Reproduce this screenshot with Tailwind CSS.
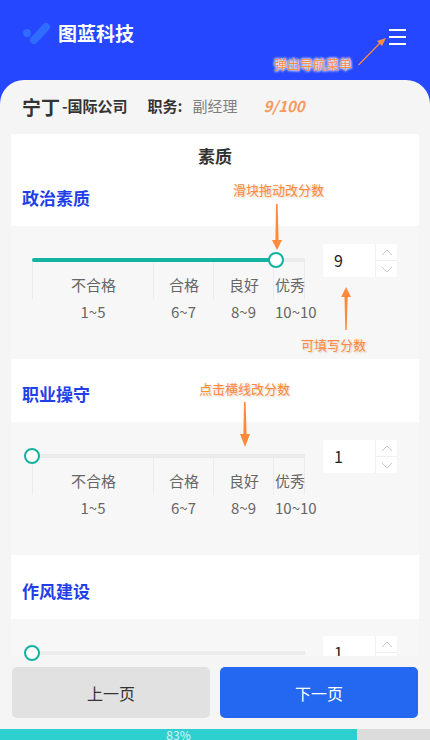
<!DOCTYPE html>
<html lang="zh-CN">
<head>
    <meta charset="UTF-8" />
    <meta name="viewport" content="width=device-width, initial-scale=1.0" />
    <title>素质评分</title>
    <script src="https://cdn.jsdelivr.net/npm/@tailwindcss/browser@4"></script>
</head>
<body class="bg-[#2447ff] font-['Noto_Sans_CJK_SC','Noto_Sans',sans-serif]">

<div class="relative w-[430px] h-[740px] overflow-hidden bg-[#2447ff] flex flex-col">

    <!-- header -->
    <div class="h-[80px] shrink-0 flex justify-between items-start pl-[22px] pr-[24px] pt-[19px]">
        <div class="flex items-center gap-[7px] h-[28px]">
            <svg width="29" height="24" viewBox="0 0 29 24">
                <circle cx="5" cy="12" r="4" fill="#2f6cff" />
                <line x1="12" y1="19" x2="24" y2="6" stroke="#2f6cff" stroke-width="8" stroke-linecap="round" />
            </svg>
            <span class="text-white text-[19px] font-bold leading-[28px]">图蓝科技</span>
        </div>
        <div class="w-[17px] mt-[10px] flex flex-col gap-[5px]">
            <div class="h-[2px] bg-white"></div>
            <div class="h-[2px] bg-white"></div>
            <div class="h-[2px] bg-white"></div>
        </div>
    </div>

    <!-- panel -->
    <div class="flex-1 min-h-0 bg-[#f5f5f5] rounded-t-[24px] flex flex-col">
        <div class="h-[52px] mb-[2px] shrink-0 flex items-center pl-[22px] text-[#333]">
            <span class="text-[19px] font-bold leading-none">宁丁</span>
            <span class="text-[15px] font-bold ml-[2px]">-国际公司</span>
            <span class="text-[15px] font-bold ml-[20px]">职务:</span>
            <span class="text-[15px] text-[#808080] ml-[10px]">副经理</span>
            <span class="text-[15px] font-bold italic text-[#f89a5e] ml-[26px]">9/100</span>
        </div>

        <div class="flex-1 min-h-0 overflow-hidden mx-[11px]">
            <!-- 政治素质 -->
            <div class="bg-white h-[92px] pt-[10px]">
                <div class="text-center text-[17px] font-bold text-[#333] leading-[24px]">素质</div>
                <div class="mt-[18px] pl-[11px] text-[17px] font-bold text-[#1f3fe8] leading-[24px]">政治素质</div>
            </div>
            <div class="bg-[#f7f7f7] h-[133px] pt-[18px] flex items-start">
                <div class="w-[273px] ml-[21px] shrink-0">
                    <div class="relative h-[4px] mt-[14px] bg-[#ebebeb]">
                        <div class="absolute left-0 top-0 h-[4px] w-[244px] bg-[#12b3a0] rounded-full"></div>
                        <div class="absolute left-[236px] top-[-6px] w-[16px] h-[16px] rounded-full border-2 border-[#12b3a0] bg-white"></div>
                    </div>
                    <div class="flex text-[15px] text-[#666]">
                        <div class="w-[121px] text-center"><div class="h-[37px] border-l border-[#ebebeb] pt-[12px] pl-[1px] leading-[22px]">不合格</div><div class="pl-[1px] leading-[26px]">1~5</div></div>
                        <div class="w-[60px] text-center"><div class="h-[37px] border-l border-[#ebebeb] pt-[12px] pl-[1px] leading-[22px]">合格</div><div class="pl-[1px] leading-[26px]">6~7</div></div>
                        <div class="w-[60px] text-center"><div class="h-[37px] border-l border-[#ebebeb] pt-[12px] pl-[1px] leading-[22px]">良好</div><div class="pl-[1px] leading-[26px]">8~9</div></div>
                        <div class="w-[32px]"><div class="h-[37px] border-x border-[#ebebeb] pt-[12px] pl-[1px] leading-[22px] whitespace-nowrap">优秀</div><div class="pl-[2px] leading-[26px] whitespace-nowrap">10~10</div></div>
                    </div>
                </div>
                <div class="ml-[18px] w-[74px] h-[33px] bg-white rounded-[3px] flex">
                    <div class="w-[52px] pl-[11px] text-[16px] text-[#222] leading-[32px]">9</div>
                    <div class="flex-1 flex flex-col border-l border-[#f0f0f0]">
                        <div class="flex-1 flex items-center justify-center border-b border-[#f0f0f0]"><svg width="12" height="7" viewBox="0 0 12 7"><path d="M1 6l5-5 5 5" fill="none" stroke="#c8c8c8" /></svg></div>
                        <div class="flex-1 flex items-center justify-center"><svg width="12" height="7" viewBox="0 0 12 7"><path d="M1 1l5 5 5-5" fill="none" stroke="#c8c8c8" /></svg></div>
                    </div>
                </div>
            </div>

            <!-- 职业操守 -->
            <div class="bg-white h-[63px] pt-[23px] pl-[11px] text-[17px] font-bold text-[#1f3fe8] leading-[24px]">职业操守</div>
            <div class="bg-[#f7f7f7] h-[133px] pt-[18px] flex items-start">
                <div class="w-[273px] ml-[21px] shrink-0">
                    <div class="relative h-[4px] mt-[14px] bg-[#ebebeb]">
                        <div class="absolute left-[-8px] top-[-6px] w-[16px] h-[16px] rounded-full border-2 border-[#12b3a0] bg-white"></div>
                    </div>
                    <div class="flex text-[15px] text-[#666]">
                        <div class="w-[121px] text-center"><div class="h-[37px] border-l border-[#ebebeb] pt-[12px] pl-[1px] leading-[22px]">不合格</div><div class="pl-[1px] leading-[26px]">1~5</div></div>
                        <div class="w-[60px] text-center"><div class="h-[37px] border-l border-[#ebebeb] pt-[12px] pl-[1px] leading-[22px]">合格</div><div class="pl-[1px] leading-[26px]">6~7</div></div>
                        <div class="w-[60px] text-center"><div class="h-[37px] border-l border-[#ebebeb] pt-[12px] pl-[1px] leading-[22px]">良好</div><div class="pl-[1px] leading-[26px]">8~9</div></div>
                        <div class="w-[32px]"><div class="h-[37px] border-x border-[#ebebeb] pt-[12px] pl-[1px] leading-[22px] whitespace-nowrap">优秀</div><div class="pl-[2px] leading-[26px] whitespace-nowrap">10~10</div></div>
                    </div>
                </div>
                <div class="ml-[18px] w-[74px] h-[33px] bg-white rounded-[3px] flex">
                    <div class="w-[52px] pl-[11px] text-[16px] text-[#222] leading-[32px]">1</div>
                    <div class="flex-1 flex flex-col border-l border-[#f0f0f0]">
                        <div class="flex-1 flex items-center justify-center border-b border-[#f0f0f0]"><svg width="12" height="7" viewBox="0 0 12 7"><path d="M1 6l5-5 5 5" fill="none" stroke="#c8c8c8" /></svg></div>
                        <div class="flex-1 flex items-center justify-center"><svg width="12" height="7" viewBox="0 0 12 7"><path d="M1 1l5 5 5-5" fill="none" stroke="#c8c8c8" /></svg></div>
                    </div>
                </div>
            </div>

            <!-- 作风建设 -->
            <div class="bg-white h-[64px] pt-[24px] pl-[11px] text-[17px] font-bold text-[#1f3fe8] leading-[24px]">作风建设</div>
            <div class="bg-[#f7f7f7] h-[133px] pt-[17px] flex items-start">
                <div class="w-[273px] ml-[21px] shrink-0">
                    <div class="h-[4px] mt-[15px] bg-[#ebebeb]"></div>
                </div>
                <div class="ml-[18px] w-[74px] h-[33px] bg-white rounded-[3px] flex">
                    <div class="w-[52px] pl-[11px] text-[16px] text-[#222] leading-[32px]">1</div>
                    <div class="flex-1 flex flex-col border-l border-[#f0f0f0]">
                        <div class="flex-1 flex items-center justify-center border-b border-[#f0f0f0]"><svg width="12" height="7" viewBox="0 0 12 7"><path d="M1 6l5-5 5 5" fill="none" stroke="#c8c8c8" /></svg></div>
                        <div class="flex-1"></div>
                    </div>
                </div>
            </div>
        </div>

        <!-- footer buttons -->
        <div class="h-[73px] shrink-0 bg-[#f5f5f5] flex gap-[10px] px-[12px] pt-[11px]">
            <div class="w-[198px] h-[51px] bg-[#e1e1e1] rounded-[5px] flex items-center justify-center text-[16px] text-[#333]">上一页</div>
            <div class="w-[198px] h-[51px] bg-[#2468f2] rounded-[5px] flex items-center justify-center text-[16px] text-white">下一页</div>
        </div>
    </div>

    <!-- progress -->
    <div class="h-[11px] shrink-0 bg-[#dcdcdc]">
        <div class="w-[357px] h-[11px] bg-[#2ecfcf] text-center text-[12px] leading-[11px] text-white/80">83%</div>
    </div>

    <!-- third thumb sits above the footer -->
    <div class="absolute left-[24px] top-[645px] w-[16px] h-[16px] rounded-full border-2 border-[#12b3a0] bg-white"></div>

    <!-- annotations drawn over the page -->
    <svg class="absolute left-0 top-0 pointer-events-none" width="430" height="740" viewBox="0 0 430 740">
        <line x1="358.5" y1="65" x2="380" y2="43" stroke="#ff8a3c" stroke-width="1.2" />
        <path d="M386 38l-9 3 5 5z" fill="#ff8a3c" />
        <path d="M276 204h1.6l1 36h3.4l-5 10-5-10h3.4z" fill="#ff8a3c" />
        <path d="M345.3 330h1.4l1 -33h3.3l-4.9 -10-4.9 10h3.3z" fill="#ff8a3c" />
        <path d="M244 402h1.6l1 32h3.4l-5 13-5-13h3.4z" fill="#ff8a3c" />
    </svg>
    <div class="absolute left-[274px] top-[55px] text-[13px] leading-[18px] text-[#ff8a3c] [text-shadow:0_0_3px_#fff,0_0_3px_#fff,0_0_3px_#fff]">弹出导航菜单</div>
    <div class="absolute left-[233px] top-[181px] text-[13px] leading-[18px] text-[#ff8a3c] [text-shadow:1px_1px_2px_#d9c5b5]">滑块拖动改分数</div>
    <div class="absolute left-[301px] top-[336px] text-[13px] leading-[18px] text-[#ff8a3c] [text-shadow:1px_1px_2px_#d9c5b5]">可填写分数</div>
    <div class="absolute left-[199px] top-[380px] text-[13px] leading-[18px] text-[#ff8a3c] [text-shadow:1px_1px_2px_#d9c5b5]">点击横线改分数</div>
</div>

</body>
</html>
